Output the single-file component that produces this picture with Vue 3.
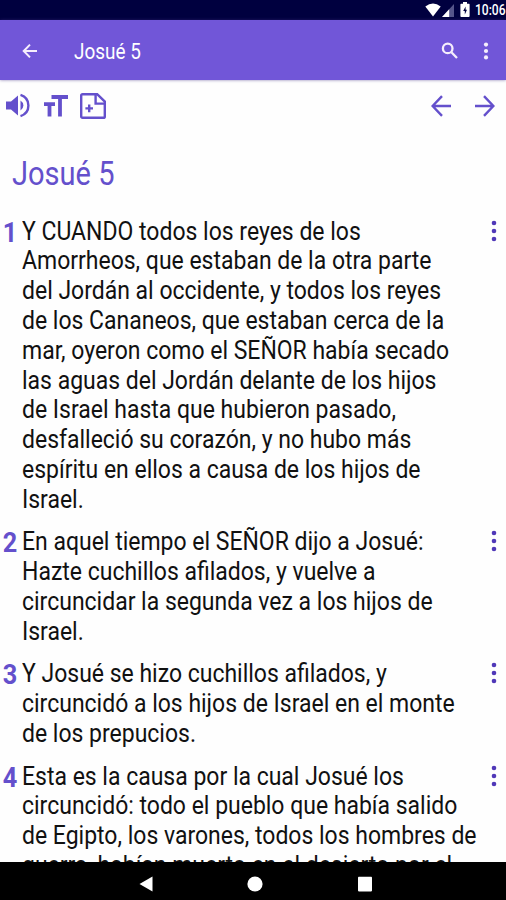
<template>
  <div class="screen">
    <div class="status">
      <svg class="wifi" viewBox="0 0 16 14"><path d="M0.3 3.6 Q8 -2.4 15.7 3.6 L8 13.4 Z" fill="#fff" /></svg>
      <svg class="signal" viewBox="0 0 12 13">
        <path d="M12 0 V13 H0 Z" fill="#55558a" />
        <path d="M7.2 5.2 V13 H0 Z" fill="#fff" />
      </svg>
      <svg class="battery" viewBox="0 0 10 15">
        <path d="M3 0 H7 V1.8 H9 Q9.6 1.8 9.6 2.6 V14 Q9.6 15 8.8 15 H1.2 Q0.4 15 0.4 14 V2.6 Q0.4 1.8 1.2 1.8 H3 Z" fill="#fff" />
        <path d="M5.6 4.4 L3.2 9 H4.8 V12.4 L7 7.8 H5.6 Z" fill="#00003f" />
      </svg>
      <span class="clock">10:06</span>
    </div>

    <header class="appbar">
      <svg class="back" viewBox="0 0 16 16"><path d="M15 8 H2 M8 1.6 L1.7 8 L8 14.4" /></svg>
      <h1 class="title"><span class="narrow">{{ chapter }}</span></h1>
      <svg class="search" viewBox="0 0 18 18">
        <circle cx="6.7" cy="6.4" r="4.8" />
        <path d="M10.4 10.2 L16 16" />
      </svg>
      <svg class="more" viewBox="0 0 6 18">
        <circle v-for="y in [2.6, 9, 15.4]" :key="y" cx="3" :cy="y" r="2.1" />
      </svg>
    </header>

    <div class="tools">
      <svg class="sound" viewBox="0 0 24 25">
        <path d="M0 8.4 H5 L12 2.4 V22.6 L5 16.6 H0 Z" fill="#6450cc" />
        <path d="M14.5 7.4 Q17.4 9.2 17.4 12.5 Q17.4 15.8 14.5 17.6 Z" fill="#6450cc" />
        <path d="M14.5 1.9 Q22.4 4.4 22.4 12.5 Q22.4 20.6 14.5 23.1" class="line" />
      </svg>
      <svg class="size" viewBox="0 0 24 22">
        <path d="M7.5 2 H24 M16 2 V21.5" class="thick" />
        <path d="M0 9.2 H11 M5.5 9.2 V21.5" class="thick" />
      </svg>
      <svg class="note" viewBox="0 0 26 26">
        <path d="M2.6 1.2 H17.2 L24.8 8.6 V23.4 Q24.8 24.8 23.4 24.8 H2.6 Q1.2 24.8 1.2 23.4 V2.6 Q1.2 1.2 2.6 1.2 Z" class="line" />
        <path d="M15.6 1.6 V10.6 H24.6" class="line" />
        <path d="M5.4 15.4 H13 M9.2 11.6 V19.2" class="line" />
      </svg>
      <svg class="prev" viewBox="0 0 20 22"><path d="M20 11 H2 M11 1.2 L1.6 11 L11 20.8" class="line" /></svg>
      <svg class="next" viewBox="0 0 20 22"><path d="M0 11 H18 M9 1.2 L18.4 11 L9 20.8" class="line" /></svg>
    </div>

    <main class="content">
      <h2 class="heading"><span class="narrow">{{ chapter }}</span></h2>
      <div v-for="verse in verses" :key="verse.n" class="verse">
        <b class="num">{{ verse.n }}</b>
        <p class="text"><span v-for="line in verse.lines" :key="line" class="row">{{ line }}</span></p>
        <svg class="dots" viewBox="0 0 6 22">
          <circle v-for="y in [3, 11, 19]" :key="y" cx="3" :cy="y" r="2.3" />
        </svg>
      </div>
    </main>

    <nav class="navbar">
      <svg viewBox="0 0 14 16"><path d="M13.5 0.5 V15.5 L0.5 8 Z" /></svg>
      <svg viewBox="0 0 16 16"><circle cx="8" cy="8" r="7.6" /></svg>
      <svg viewBox="0 0 14 16"><rect x="0" y="0.8" width="14" height="14.6" rx="0.8" /></svg>
    </nav>
  </div>
</template>

<script setup>
const chapter = 'Josué 5'

const verses = [
  {
    n: 1,
    lines: [
      'Y CUANDO todos los reyes de los',
      'Amorrheos, que estaban de la otra parte',
      'del Jordán al occidente, y todos los reyes',
      'de los Cananeos, que estaban cerca de la',
      'mar, oyeron como el SEÑOR había secado',
      'las aguas del Jordán delante de los hijos',
      'de Israel hasta que hubieron pasado,',
      'desfalleció su corazón, y no hubo más',
      'espíritu en ellos a causa de los hijos de',
      'Israel.'
    ]
  },
  {
    n: 2,
    lines: [
      'En aquel tiempo el SEÑOR dijo a Josué:',
      'Hazte cuchillos afilados, y vuelve a',
      'circuncidar la segunda vez a los hijos de',
      'Israel.'
    ]
  },
  {
    n: 3,
    lines: [
      'Y Josué se hizo cuchillos afilados, y',
      'circuncidó a los hijos de Israel en el monte',
      'de los prepucios.'
    ]
  },
  {
    n: 4,
    lines: [
      'Esta es la causa por la cual Josué los',
      'circuncidó: todo el pueblo que había salido',
      'de Egipto, los varones, todos los hombres de',
      'guerra, habían muerto en el desierto por el'
    ]
  }
]
</script>

<style>
body {
  margin: 0;
}
</style>

<style scoped>
.screen {
  width: 506px;
  height: 900px;
  display: flex;
  flex-direction: column;
  overflow: hidden;
  background: #fefefe;
  font-family: Roboto, sans-serif;
}
svg {
  display: block;
  flex: none;
}
.status {
  flex: none;
  height: 20px;
  display: flex;
  align-items: center;
  justify-content: flex-end;
  background: #00003f;
  color: #fff;
}
.wifi {
  width: 16px;
  height: 14px;
}
.signal {
  width: 12px;
  height: 13px;
  margin-left: 1px;
}
.battery {
  width: 10px;
  height: 15px;
  margin: 0 5px 2px 6px;
}
.clock {
  width: 31px;
  font-size: 14px;
  font-weight: 500;
  line-height: 19px;
  white-space: nowrap;
  transform: scaleX(0.86);
  transform-origin: 0 50%;
}
.appbar {
  flex: none;
  height: 60px;
  display: flex;
  align-items: center;
  box-sizing: border-box;
  padding: 1px 17px 0 22px;
  background: #7156d8;
  box-shadow: 0 0 3px rgba(60, 40, 130, 0.6);
  color: #fff;
  z-index: 1;
}
.appbar svg {
  fill: none;
  stroke: #f6eefc;
  stroke-width: 2;
}
.back {
  width: 16px;
  height: 16px;
}
.title {
  flex: 1;
  margin: 0 0 0 36px;
  padding-top: 1px;
  font-size: 21.5px;
  font-weight: 400;
}
.narrow,
.row {
  display: block;
  white-space: nowrap;
  transform: scaleX(0.88);
  transform-origin: 0 50%;
}
.row {
  transform: scaleX(0.901);
}
.appbar .search {
  width: 18px;
  height: 18px;
  margin-right: 24px;
  stroke-width: 2.3;
}
.more {
  width: 6px;
  height: 18px;
}
.appbar .more {
  fill: #f6eefc;
  stroke: none;
}
.tools {
  flex: none;
  height: 50px;
  display: flex;
  align-items: center;
  box-sizing: border-box;
  padding: 1px 11px 0 6px;
}
.tools .line {
  fill: none;
  stroke: #6450cc;
  stroke-width: 2.4;
}
.tools .thick {
  fill: none;
  stroke: #6450cc;
  stroke-width: 3.8;
}
.sound {
  width: 24px;
  height: 25px;
}
.size {
  width: 24px;
  height: 22px;
  margin-left: 14px;
}
.note {
  width: 26px;
  height: 26px;
  margin-left: 12px;
}
.prev {
  width: 20px;
  height: 22px;
  margin-left: auto;
}
.next {
  width: 20px;
  height: 22px;
  margin-left: 24px;
}
.content {
  flex: 1;
  min-height: 0;
  overflow: hidden;
}
.heading {
  height: 86.5px;
  margin: 0 0 0 12px;
  box-sizing: border-box;
  padding-top: 24px;
  font-size: 33px;
  font-weight: 400;
  line-height: 40px;
  color: #6450cc;
}
.verse {
  display: flex;
  align-items: flex-start;
  padding-right: 9px;
  margin-bottom: 12.7px;
}
.num {
  width: 19.5px;
  padding-left: 2px;
  font-size: 27.5px;
  line-height: 32px;
  color: #6450cc;
  transform: scaleX(0.92);
}
.text {
  flex: 1;
  min-width: 0;
  margin: 0;
  font-size: 25.5px;
  line-height: 29.83px;
  color: #111;
}
.dots {
  width: 6px;
  height: 22px;
  margin-top: 3px;
  fill: #5038b8;
}
.navbar {
  flex: none;
  height: 32px;
  display: flex;
  align-items: center;
  justify-content: center;
  gap: 94.5px;
  padding: 6px 0 0 4px;
  background: #000;
}
.navbar svg {
  height: 16px;
  fill: #fff;
}
</style>
